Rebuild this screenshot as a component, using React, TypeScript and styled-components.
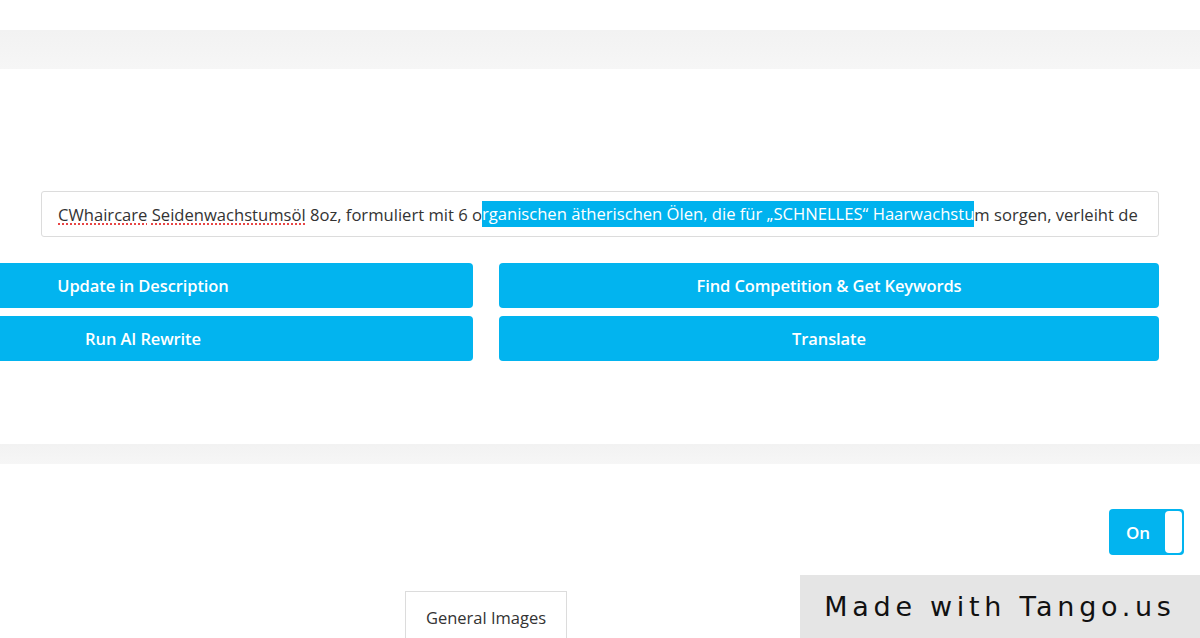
import styled, { createGlobalStyle } from 'styled-components';

const GlobalStyle = createGlobalStyle`
  html, body {
    margin: 0;
    padding: 0;
    background: #fff;
  }
  body {
    font-family: 'Open Sans', 'Liberation Sans', sans-serif;
    color: #333;
  }
`;

const Page = styled.div`
  position: relative;
  width: 1200px;
  height: 638px;
  overflow: hidden;
  background: #fff;
`;

const TopSpacer = styled.div`
  height: 30px;
`;

const Band = styled.div<{ $h: number }>`
  height: ${({ $h }) => $h}px;
  background: linear-gradient(180deg, #f2f2f2 0%, #f6f6f6 100%);
`;

const Panel = styled.section`
  display: flex;
  flex-direction: column;
  padding: 122px 41px 83px 41px;
`;

const FieldBox = styled.div`
  box-sizing: border-box;
  height: 46px;
  border: 1px solid #dcdcdc;
  border-radius: 3px;
  display: flex;
  align-items: center;
  padding: 0 16px;
  font-size: 16.6px;
  white-space: nowrap;
  overflow: hidden;
  color: #333;
`;

const Spell = styled.span`
  text-decoration: underline dotted #e84545;
  text-decoration-thickness: 2px;
  text-underline-offset: 3px;
`;

const Selected = styled.span`
  background: #00b2ee;
  color: #fff;
  padding: 1px 0 2px;
`;

const ButtonGrid = styled.div`
  display: grid;
  grid-template-columns: 660px 660px;
  column-gap: 26px;
  row-gap: 8px;
  margin: 26px 0 0 -228px;
`;

const ActionButton = styled.button`
  height: 45px;
  border: none;
  border-radius: 4px;
  background: #02b4ef;
  color: #fff;
  font-family: 'Open Sans', 'Liberation Sans', sans-serif;
  font-size: 16.5px;
  font-weight: 600;
  letter-spacing: -0.1px;
  cursor: pointer;
`;

const Lower = styled.section`
  display: flex;
  flex-direction: column;
  padding: 45px 16px 0 0;
`;

const ToggleRow = styled.div`
  display: flex;
  justify-content: flex-end;
`;

const Toggle = styled.div`
  box-sizing: border-box;
  width: 75px;
  height: 46px;
  border-radius: 4px;
  background: #02b4ef;
  display: flex;
  align-items: center;
  padding: 2px;
`;

const ToggleLabel = styled.span`
  flex: 1;
  text-align: center;
  color: #fff;
  font-weight: 600;
  font-size: 17px;
`;

const Knob = styled.span`
  width: 17px;
  height: 42px;
  border-radius: 4px;
  background: #fff;
`;

const TabRow = styled.div`
  display: flex;
  margin: 36px 0 0 405px;
`;

const Tab = styled.div`
  box-sizing: border-box;
  width: 162px;
  height: 60px;
  border: 1px solid #dcdcdc;
  border-bottom: none;
  display: flex;
  justify-content: center;
  padding-top: 14px;
  font-size: 16.5px;
  color: #333;
`;

const Watermark = styled.div`
  position: absolute;
  right: 0;
  bottom: 0;
  width: 400px;
  height: 63px;
  background: #e5e5e5;
  display: flex;
  align-items: center;
  justify-content: center;
  font-family: 'DejaVu Sans', 'Liberation Sans', sans-serif;
  font-size: 27px;
  letter-spacing: 4.7px;
  color: #111;
`;

export default function App() {
  return (
    <Page>
      <GlobalStyle />
      <TopSpacer />
      <Band $h={39} />
      <Panel>
        <FieldBox>
          <Spell>CWhaircare</Spell>&nbsp;<Spell>Seidenwachstumsöl</Spell>&nbsp;8oz, formuliert mit 6 o
          <Selected>rganischen ätherischen Ölen, die für „SCHNELLES“ Haarwachstu</Selected>
          m sorgen, verleiht de
        </FieldBox>
        <ButtonGrid>
          <ActionButton>Update in Description</ActionButton>
          <ActionButton>Find Competition &amp; Get Keywords</ActionButton>
          <ActionButton>Run AI Rewrite</ActionButton>
          <ActionButton>Translate</ActionButton>
        </ButtonGrid>
      </Panel>
      <Band $h={20} />
      <Lower>
        <ToggleRow>
          <Toggle>
            <ToggleLabel>On</ToggleLabel>
            <Knob />
          </Toggle>
        </ToggleRow>
        <TabRow>
          <Tab>General Images</Tab>
        </TabRow>
      </Lower>
      <Watermark>Made with Tango.us</Watermark>
    </Page>
  );
}
